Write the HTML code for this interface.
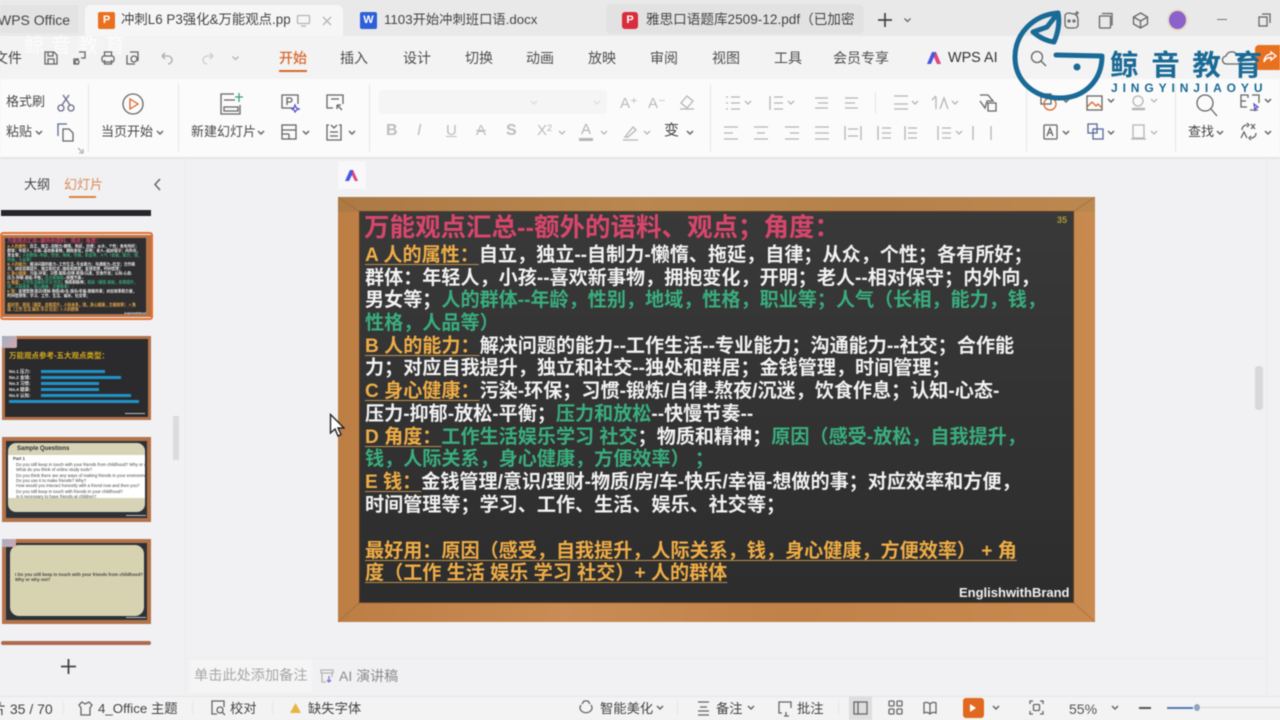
<!DOCTYPE html>
<html lang="zh"><head><meta charset="utf-8"><title>WPS</title>
<style>
html,body{margin:0;padding:0;width:1280px;height:720px;overflow:hidden;background:#f1f1f3}
#r{position:absolute;left:0;top:0;width:1280px;height:720px;overflow:hidden;background:#f1f1f3;font-family:"Liberation Sans","Noto Sans CJK SC",sans-serif;color:#444;filter:blur(.55px)}
.a{position:absolute;white-space:nowrap}
.m{position:absolute;white-space:nowrap;font-size:14px;line-height:20px;top:48px;color:#4d4d4d}
.s{position:absolute;white-space:nowrap;font-size:13px;line-height:18px;color:#4a4a4a}
.st{position:absolute;white-space:nowrap;font-size:13.3px;line-height:18px;top:700px;color:#444}
svg.i{position:absolute;overflow:visible;fill:none;stroke:#666;stroke-width:1.3}
svg.l{stroke:#b5b5b5}
.ln{position:absolute;left:365px;white-space:nowrap;font-size:19.1px;line-height:23px;font-weight:700;color:#f2f2f2}
.o{color:#f0ad45;text-decoration:underline;text-decoration-color:#b98f52;text-decoration-thickness:1px;text-underline-offset:3px}
.g{color:#39ae7e}
.th{position:absolute;left:2px;width:149px;background:#2b2b2d;border:3px solid #b37248;box-sizing:border-box;overflow:hidden}
.b{position:absolute;height:3px}
.sep{position:absolute;width:1px;background:#e6e6e6}
.tq{position:absolute;white-space:nowrap;font-size:4.3px;line-height:5px;color:#444}
</style></head><body><div id="r">

<!-- tab bar -->
<div class="a" style="left:0;top:0;width:1280px;height:36px;background:#e9e9e9"></div>
<div class="a" style="left:0;top:5px;width:78px;height:28px;background:#e3e3e3"></div>
<div class="a" style="left:-2px;top:10px;font-size:14px;line-height:20px;color:#444">WPS Office</div>
<div class="a" style="left:85px;top:5px;width:258px;height:31px;background:#f6f6f6;border-radius:6px 6px 0 0"></div>
<div class="a" style="left:98px;top:12px;width:17px;height:17px;background:#e8701f;border-radius:2px;color:#fff;font-size:11px;line-height:17px;text-align:center;font-weight:700">P</div>
<div class="a" style="left:121px;top:10px;width:169px;overflow:hidden;font-size:13.4px;line-height:20px;color:#444">冲刺L6 P3强化&amp;万能观点.pptx</div>
<svg class="i l" style="left:296px;top:14px" width="16" height="14"><rect x="1.5" y="1.5" width="12" height="8" rx="1"/><path d="M5 12h5"/></svg>
<svg class="i l" style="left:321px;top:15px" width="12" height="12"><path d="M2 2l8 8M10 2l-8 8"/></svg>
<div class="a" style="left:360px;top:12px;width:17px;height:17px;background:#2c5fd8;border-radius:2px;color:#fff;font-size:11px;line-height:17px;text-align:center;font-weight:700">W</div>
<div class="a" style="left:384px;top:10px;font-size:13.3px;line-height:20px;color:#444">1103开始冲刺班口语.docx</div>
<div class="a" style="left:606px;top:4px;width:258px;height:30px;background:#e2e2e2;border-radius:6px"></div>
<div class="a" style="left:622px;top:12px;width:16px;height:17px;background:#d92c3c;border-radius:3px;color:#fff;font-size:11px;line-height:17px;text-align:center;font-weight:700">P</div>
<div class="a" style="left:646px;top:10px;width:208px;overflow:hidden;font-size:13.6px;line-height:20px;color:#444">雅思口语题库2509-12.pdf（已加密）</div>
<svg class="i" style="left:877px;top:12px;stroke:#444;stroke-width:1.7" width="16" height="16"><path d="M8 1v14M1 8h14"/></svg>
<svg class="i" style="left:903px;top:17px" width="10" height="7"><path d="M1.5 1.5l3 3 3-3"/></svg>
<svg class="i" style="left:1063px;top:10px" width="17" height="19"><path d="M2 6c0-2 2-3 4-3l5 1c3 1 4 3 4 6v5c0 2-2 3-4 3H6c-3 0-4-2-4-4z"/><circle cx="6" cy="11" r="1"/><circle cx="11" cy="11" r="1"/><path d="M14 1v4M12 3h4"/></svg>
<svg class="i" style="left:1098px;top:12px" width="16" height="17"><rect x="1.5" y="4" width="11" height="12" rx="1"/><path d="M4 1.5h10v12"/></svg>
<svg class="i" style="left:1132px;top:12px" width="17" height="17"><path d="M8.5 1l7 4v7l-7 4-7-4V5zM1.5 5l7 4 7-4M8.5 9v7"/></svg>
<div class="a" style="left:1169px;top:11px;width:17px;height:18px;border-radius:50%;background:#8a62c9;box-shadow:0 0 0 2px #e9d9c4"></div>
<div class="a" style="left:1217px;top:19px;width:10px;height:1px;background:#777"></div>
<svg class="i" style="left:1258px;top:13px" width="13" height="14"><rect x="1" y="4" width="8" height="9"/><path d="M4 1h8v9"/></svg>

<!-- menu row -->
<div class="a" style="left:0;top:36px;width:1280px;height:43px;background:#f3f3f3"></div>
<div class="a" style="left:-6px;top:48px;font-size:14px;line-height:20px;color:#444">文件</div>
<div class="a" style="left:24px;top:34px;font-size:20px;line-height:24px;color:#fff;opacity:.8;letter-spacing:7px">鲸音教育</div>
<svg class="i" style="left:43px;top:50px" width="16" height="16"><path d="M2 2h9l3 3v9H2zM5 2v4h5V2M5 14V9h6v5"/></svg>
<svg class="i" style="left:72px;top:50px" width="16" height="16"><path d="M7 2h6v6H9M7 14H2V9h5"/><circle cx="5" cy="12" r="2"/></svg>
<svg class="i" style="left:100px;top:50px" width="16" height="16"><rect x="2" y="6" width="12" height="6" rx="2"/><path d="M4.5 6V2h7v4M4.5 10v4h7v-4"/></svg>
<svg class="i" style="left:125px;top:50px" width="16" height="16"><path d="M5 2h8v9M2 5v9h8"/><circle cx="9" cy="9" r="3"/></svg>
<svg class="i l" style="left:160px;top:51px;stroke:#aaa" width="14" height="13"><path d="M2 5h6a4 4 0 010 8M2 5l3-3M2 5l3 3"/></svg>
<svg class="i l" style="left:201px;top:51px;stroke:#ccc" width="14" height="13"><path d="M12 5H6a4 4 0 000 8M12 5L9 2M12 5L9 8"/></svg>
<svg class="i l" style="left:231px;top:55px" width="10" height="7"><path d="M1.5 1.5l3 3 3-3"/></svg>
<div class="m" style="left:279px;color:#d9682a;font-weight:500">开始</div>
<div class="a" style="left:279px;top:70px;width:28px;height:2px;background:#d9682a"></div>
<div class="m" style="left:340px">插入</div>
<div class="m" style="left:403px">设计</div>
<div class="m" style="left:465px">切换</div>
<div class="m" style="left:526px">动画</div>
<div class="m" style="left:588px">放映</div>
<div class="m" style="left:650px">审阅</div>
<div class="m" style="left:712px">视图</div>
<div class="m" style="left:774px">工具</div>
<div class="m" style="left:833px">会员专享</div>
<svg class="a" style="left:926px;top:50px" width="16" height="15"><path d="M1 14L6 2h4l5 12h-4L8 7l-3 7z" fill="#4a58e0"/><path d="M10 2l5 12h-4L8 7z" fill="#e8457a"/></svg>
<div class="m" style="left:948px;color:#333;font-size:14.4px">WPS AI</div>
<svg class="i" style="left:1030px;top:50px" width="17" height="17"><circle cx="7" cy="7" r="5.5"/><path d="M11 11l5 5"/></svg>
<svg class="i" style="left:1222px;top:50px" width="20" height="17"><path d="M5 14a4 4 0 01-1-8 6 6 0 0111-1 4.5 4.500 0 011 9z"/></svg>
<div class="a" style="left:1255px;top:45px;width:25px;height:25px;background:#e8701f;border-radius:4px 0 0 4px"></div>
<svg class="i" style="left:1262px;top:50px;stroke:#fff;stroke-width:1.4" width="16" height="15"><path d="M9 2l5 4-5 4V7.500C5 7.500 3 9 2 12c0-5 3-7.500 7-8z"/></svg>

<!-- ribbon -->
<div class="a" style="left:0;top:79px;width:1280px;height:78px;background:#fbfbfb;border-bottom:2px solid #e6e6e6"></div>
<div class="sep" style="left:88px;top:84px;height:68px"></div>
<div class="sep" style="left:178px;top:84px;height:68px"></div>
<div class="sep" style="left:369px;top:84px;height:68px"></div>
<div class="sep" style="left:710px;top:84px;height:68px"></div>
<div class="sep" style="left:875px;top:92px;height:22px"></div>
<div class="sep" style="left:1026px;top:84px;height:68px"></div>
<div class="sep" style="left:1175px;top:84px;height:68px"></div>

<div class="s" style="left:6px;top:93px">格式刷</div>
<svg class="i" style="left:57px;top:94px;stroke:#6a6a8a" width="18" height="18"><circle cx="4" cy="14" r="3"/><circle cx="14" cy="14" r="3"/><path d="M5 11L12 1M13 11L6 1"/></svg>
<div class="s" style="left:6px;top:123px">粘贴</div>
<svg class="i" style="left:35px;top:130px" width="8" height="6"><path d="M1 1l3 3 3-3" stroke-width="1.5"/></svg>
<svg class="i" style="left:57px;top:123px;stroke:#5a6a9a" width="18" height="19"><path d="M1 13V1h9"/><path d="M6 6h6l4 4v8H6z" stroke="#666"/></svg>
<svg class="i" style="left:122px;top:93px;stroke:#666" width="22" height="22"><circle cx="11" cy="11" r="10"/><path d="M8 6l8 5-8 5z" stroke="#d9682a"/></svg>
<div class="s" style="left:101px;top:123px">当页开始</div>
<svg class="i" style="left:156px;top:130px" width="8" height="6"><path d="M1 1l3 3 3-3" stroke-width="1.5"/></svg>
<svg class="i" style="left:219px;top:92px" width="24" height="23"><path d="M15 2H2v20h19v-9M5 8h11M5 15h14v4H5z"/><path d="M20 1v9M16 5h8" stroke="#3f9b7c"/></svg>
<div class="s" style="left:191px;top:123px">新建幻灯片</div>
<svg class="i" style="left:257px;top:130px" width="8" height="6"><path d="M1 1l3 3 3-3" stroke-width="1.5"/></svg>
<svg class="i" style="left:281px;top:94px" width="18" height="18"><path d="M13 14H1V1h16v9"/><path d="M6 11V4h3a2 2 0 010 4H6"/><path d="M14 11l1.5 3 2.500 1-2.500 1-1.500 2-1-2-2-1 2-1z" stroke="#5a54d0"/></svg>
<svg class="i" style="left:326px;top:94px" width="18" height="18"><path d="M7 14H1V1h16v9M5 5h8"/><path d="M16 16l-5-5M11 11v4M11 11h4"/></svg>
<svg class="i" style="left:281px;top:124px" width="16" height="16"><rect x="1" y="1" width="14" height="14"/><path d="M1 6h14M1 10h7M8 10v5"/></svg>
<svg class="i" style="left:302px;top:130px" width="8" height="6"><path d="M1 1l3 3 3-3" stroke-width="1.5"/></svg>
<svg class="i" style="left:326px;top:124px" width="16" height="17"><path d="M3 1H1v15h14V1h-2M4 8h8M4 12h8M5 1l3 3 3-3"/></svg>
<svg class="i" style="left:348px;top:130px" width="8" height="6"><path d="M1 1l3 3 3-3" stroke-width="1.5"/></svg>

<div class="a" style="left:379px;top:90px;width:228px;height:24px;background:#f5f5f5;border-radius:3px"></div>
<svg class="i l" style="left:530px;top:100px;stroke:#ddd" width="8" height="6"><path d="M1 1l3 3 3-3"/></svg>
<svg class="i l" style="left:593px;top:100px;stroke:#ddd" width="8" height="6"><path d="M1 1l3 3 3-3"/></svg>
<div class="a" style="left:386px;top:122px;font-size:16px;line-height:18px;color:#bdbdbd;font-weight:700">B</div>
<div class="a" style="left:417px;top:122px;font-size:16px;line-height:18px;color:#bdbdbd;font-style:italic">I</div>
<div class="a" style="left:446px;top:122px;font-size:15px;line-height:18px;color:#bdbdbd;text-decoration:underline">U</div>
<div class="a" style="left:476px;top:122px;font-size:15px;line-height:18px;color:#bdbdbd;text-decoration:line-through">A</div>
<div class="a" style="left:506px;top:122px;font-size:16px;line-height:18px;color:#bdbdbd;font-weight:700">S</div>
<div class="a" style="left:537px;top:122px;font-size:15px;line-height:18px;color:#bdbdbd">X²</div>
<svg class="i l" style="left:558px;top:130px" width="8" height="6"><path d="M1 1l3 3 3-3"/></svg>
<div class="a" style="left:581px;top:121px;font-size:15px;line-height:18px;color:#b5b5b5">A</div>
<div class="a" style="left:579px;top:138px;width:14px;height:3px;background:#b5b5b5"></div>
<svg class="i l" style="left:600px;top:130px" width="8" height="6"><path d="M1 1l3 3 3-3"/></svg>
<svg class="i l" style="left:622px;top:124px" width="18" height="17"><path d="M3 13L11 3l3 3-8 7zM1 16h15"/></svg>
<svg class="i l" style="left:643px;top:130px" width="8" height="6"><path d="M1 1l3 3 3-3"/></svg>
<div class="a" style="left:664px;top:122px;font-size:15px;line-height:18px;color:#444">变</div>
<svg class="i" style="left:686px;top:130px" width="8" height="6"><path d="M1 1l3 3 3-3" stroke-width="1.5"/></svg>
<div class="a" style="left:620px;top:95px;font-size:15px;line-height:18px;color:#bbb">A⁺</div>
<div class="a" style="left:648px;top:95px;font-size:15px;line-height:18px;color:#bbb">A⁻</div>
<svg class="i l" style="left:678px;top:94px" width="18" height="17"><path d="M3 9l6-7 6 5-6 7zM2 15h14"/></svg>

<!-- paragraph icons -->
<svg class="i l" style="left:725px;top:95px" width="140" height="16"><path d="M1 2h2M1 8h2M1 14h2M6 2h9M6 8h9M6 14h9M20 6l3 3 3-3M45 1v14M49 2h9M49 8h9M49 14h9M63 6l3 3 3-3M90 3h13M93 8h10M90 13h13M120 3h13M120 8h10M120 13h13"/></svg>
<svg class="i l" style="left:723px;top:125px" width="260" height="16"><path d="M1 2h14M1 8h9M1 14h14M31 2h14M34 8h8M31 14h14M62 2h14M67 8h9M62 14h14M92 2h14M92 8h14M92 14h14M122 1v14M125 4h10M125 11h10M138 1v14M155 1v14M159 3h9M159 8h9M159 13h9M185 3h9M185 8h9M185 13h9M182 1v14M215 1v14M219 3h9M219 8h9M219 13h9M233 6l3 3 3-3M250 1v14M268 1v14"/></svg>
<svg class="i l" style="left:892px;top:95px" width="78" height="16"><path d="M2 1h14M2 14h14M2 9h14M20 6l3 3 3-3M44 14V2M40 5l4-4M48 14l4-11 4 11M60 6l3 3 3-3"/></svg>
<svg class="i" style="left:979px;top:93px" width="18" height="19"><path d="M1 2h8l5 6H8l-2 7-5-7M9 10h8v8H9z"/></svg>

<!-- right groups -->
<svg class="i" style="left:1040px;top:93px" width="20" height="18"><rect x="1" y="1" width="10" height="10"/><circle cx="10" cy="11" r="6" stroke="#d9682a"/></svg>
<svg class="i" style="left:1062px;top:98px" width="8" height="6"><path d="M1 1l3 3 3-3" stroke-width="1.5"/></svg>
<svg class="i" style="left:1086px;top:95px" width="17" height="16"><rect x="1" y="1" width="15" height="14"/><path d="M1 12l5-5 4 4 2-2 4 4" stroke="#d9682a"/></svg>
<svg class="i" style="left:1107px;top:98px" width="8" height="6"><path d="M1 1l3 3 3-3" stroke-width="1.5"/></svg>
<svg class="i" style="left:1043px;top:124px" width="15" height="16"><path d="M1 1h13M1 15h13M1 1v14M14 1v14M4 12l3-8 3 8M5 9h4"/></svg>
<svg class="i" style="left:1062px;top:130px" width="8" height="6"><path d="M1 1l3 3 3-3" stroke-width="1.5"/></svg>
<svg class="i" style="left:1087px;top:123px;stroke:#5a6a9a" width="17" height="17"><rect x="1" y="1" width="9" height="9"/><rect x="6" y="6" width="10" height="10"/></svg>
<svg class="i" style="left:1107px;top:130px" width="8" height="6"><path d="M1 1l3 3 3-3" stroke-width="1.5"/></svg>
<svg class="i l" style="left:1130px;top:94px" width="17" height="17"><circle cx="8" cy="7" r="5"/><path d="M2 15h13" stroke-width="2.500"/></svg>
<svg class="i l" style="left:1150px;top:98px" width="8" height="6"><path d="M1 1l3 3 3-3"/></svg>
<svg class="i l" style="left:1130px;top:124px" width="17" height="16"><path d="M3 1h11v13H3zM1 15h15"/></svg>
<svg class="i l" style="left:1150px;top:130px" width="8" height="6"><path d="M1 1l3 3 3-3"/></svg>
<svg class="i" style="left:1195px;top:94px" width="24" height="24"><circle cx="10" cy="9" r="8"/><path d="M16 15l6 7"/></svg>
<div class="s" style="left:1188px;top:123px;color:#444">查找</div>
<svg class="i" style="left:1216px;top:130px" width="8" height="6"><path d="M1 1l3 3 3-3" stroke-width="1.5"/></svg>
<svg class="i" style="left:1240px;top:94px" width="20" height="18"><path d="M8 4V1H1v12h6M12 1h7v8M1 7h5M10 16h8"/><path d="M14 10l4 3-2 1-1 2z" stroke="#5a54d0"/></svg>
<svg class="i" style="left:1264px;top:98px" width="8" height="6"><path d="M1 1l3 3 3-3" stroke-width="1.5"/></svg>
<svg class="i" style="left:1240px;top:122px" width="18" height="19"><path d="M2 8c0-3 2-5 5-5M7 1l2 2-2 2M16 11c0 3-2 5-5 5M11 18l-2-2 2-2M11 2l4 5M15 2l-4 5M1 16l3-6 3 6"/></svg>
<svg class="i" style="left:1264px;top:130px" width="8" height="6"><path d="M1 1l3 3 3-3" stroke-width="1.5"/></svg>
<svg class="i l" style="left:77px;top:147px" width="7" height="7"><path d="M1 1l5 5M6 2v4H2"/></svg>

<!-- logo -->
<svg class="a" style="left:0;top:0;pointer-events:none" width="1280" height="110"><g fill="none" stroke="#196a96" stroke-width="5" stroke-linejoin="round" stroke-linecap="round"><path d="M1058 13C1032 15 1015 35 1015 57C1015 82 1035 98 1060 98C1085 98 1102 80 1102 56L1056 55"/><path d="M1058 13L1047 27L1033 32C1040 38 1047 41 1054 42C1058 33 1060 22 1058 13"/></g><circle cx="1077" cy="67" r="3.5" fill="#196a96"/></svg>
<div class="a" style="left:1110px;top:47px;font-size:28.500px;line-height:38px;font-weight:700;letter-spacing:12.700px;color:#196a96">鲸音教育</div>
<div class="a" style="left:1111px;top:81px;font-size:12px;line-height:15px;font-weight:700;letter-spacing:4.900px;color:#196a96">JINGYINJIAOYU</div>

<!-- left panel -->
<div class="a" style="left:185px;top:159px;width:1px;height:536px;background:#ebebeb"></div>
<div class="a" style="left:24px;top:176px;font-size:13px;line-height:18px;color:#444">大纲</div>
<div class="a" style="left:64px;top:176px;font-size:13px;line-height:18px;color:#d98a55">幻灯片</div>
<div class="a" style="left:69px;top:196px;width:27px;height:2px;background:#d9843f"></div>
<svg class="i" style="left:153px;top:178px" width="9" height="13"><path d="M7 1L2 6.500 7 12" stroke-width="1.5"/></svg>
<div class="a" style="left:1px;top:210px;width:150px;height:6px;background:#26262a"></div>
<div class="a" style="left:173px;top:416px;width:6px;height:44px;background:#dcdcdc"></div>

<div class="a" style="left:0;top:232px;width:153px;height:88px;border:2px solid #e8702c;border-radius:3px;box-sizing:border-box"></div>
<div class="a" style="left:2px;top:235px;width:149px;height:82px;background:#b37248"></div>
<div class="a" style="left:5px;top:238px;width:141px;height:76px;background:#2e2e30"></div>
<div class="a" style="left:0;top:0;width:1280px;height:720px;transform-origin:0 0;transform:translate(-64.600px,196.200px) scale(.197)">
<div class="a" style="left:364px;top:212px;font-size:25.500px;line-height:30px;font-weight:700;color:#d8466b">万能观点汇总--额外的语料、观点；角度：</div>
<div class="ln" style="top:244px"><span class="o">A 人的属性：</span>自立，独立--自制力-懒惰、拖延，自律；从众，个性；各有所好；</div>
<div class="ln" style="top:267px">群体：年轻人，小孩--喜欢新事物，拥抱变化，开明；老人--相对保守；内外向，</div>
<div class="ln" style="top:289px">男女等；<span class="g">人的群体--年龄，性别，地域，性格，职业等；人气（长相，能力，钱，</span></div>
<div class="ln g" style="top:312px">性格，人品等）</div>
<div class="ln" style="top:335px"><span class="o">B 人的能力：</span>解决问题的能力--工作生活--专业能力；沟通能力--社交；合作能</div>
<div class="ln" style="top:357px">力；对应自我提升，独立和社交--独处和群居；金钱管理，时间管理；</div>
<div class="ln" style="top:380px"><span class="o">C 身心健康：</span>污染-环保；习惯-锻炼/自律-熬夜/沉迷，饮食作息；认知-心态-</div>
<div class="ln" style="top:403px">压力-抑郁-放松-平衡；<span class="g">压力和放松</span>--快慢节奏--</div>
<div class="ln" style="top:426px"><span class="o">D 角度：</span><span class="g">工作生活娱乐学习 社交</span>；物质和精神；<span class="g">原因（感受-放松，自我提升，</span></div>
<div class="ln g" style="top:448px">钱，人际关系，身心健康，方便效率） ；</div>
<div class="ln" style="top:471px"><span class="o">E 钱：</span>金钱管理/意识/理财-物质/房/车-快乐/幸福-想做的事；对应效率和方便，</div>
<div class="ln" style="top:494px">时间管理等；学习、工作、生活、娱乐、社交等；</div>
<div class="ln" style="top:540px;color:#f0ad45"><span class="o">最好用：原因（感受，自我提升，人际关系，钱，身心健康，方便效率） + 角</span></div>
<div class="ln" style="top:562px;color:#f0ad45"><span class="o">度（工作 生活 娱乐 学习 社交）+ 人的群体</span></div>
<div class="a" style="left:959px;top:585px;font-size:13px;line-height:16px;font-weight:700;color:#f0f0f0">EnglishwithBrand</div>
</div>

<div class="th" style="top:336px;height:84px">
<div class="a" style="left:4px;top:12px;font-size:7.500px;line-height:10px;font-weight:700;color:#d4a91e">万能观点参考-五大观点类型：</div>
<div class="a" style="left:4px;top:30px;font-size:4.500px;line-height:6px;font-weight:700;color:#e8e8e8">No.1 压力:<br>No.2 金钱:<br>No.3 习惯:<br>No.4 健康:<br>No.5 认知:</div>
<div class="b" style="left:36px;top:31px;width:64px;background:#1f93c9"></div>
<div class="b" style="left:36px;top:37px;width:80px;background:#1f93c9"></div>
<div class="b" style="left:36px;top:43px;width:58px;background:#1f93c9"></div>
<div class="b" style="left:36px;top:49px;width:58px;background:#1f93c9"></div>
<div class="b" style="left:36px;top:55px;width:90px;background:#1f93c9"></div>
<div class="b" style="left:4px;top:61px;width:130px;background:#1f93c9"></div>
<div class="b" style="left:120px;top:74px;width:20px;background:#bbb;height:1px"></div>
</div>
<div class="a" style="left:2px;top:336px;width:15px;height:12px;background:linear-gradient(135deg,#9fb0c4,#d7a7ad);border-radius:2px"></div>

<div class="th" style="top:437px;height:85px;background:#2d3238;border-width:4px">
<div class="a" style="left:2px;top:2px;width:137px;height:69px;background:#d6d3b6;border-radius:8px"></div>
<div class="a" style="left:2px;top:14px;width:137px;height:43px;background:#fff"></div>
<div class="a" style="left:11px;top:4px;font-size:6px;line-height:8px;font-weight:700;color:#333">Sample Questions</div>
<div class="tq" style="left:7px;top:15px;font-weight:700">Part 1</div>
<div class="tq" style="left:10px;top:21px">Do you still keep in touch with your friends from childhood? Why or why not?</div>
<div class="tq" style="left:10px;top:26px">What do you think of online study tools?</div>
<div class="tq" style="left:10px;top:32px">Do you think there are any ways of making friends in your environment?</div>
<div class="tq" style="left:10px;top:37px">Do you use it to make friends? Why?</div>
<div class="tq" style="left:10px;top:42px">How would you interact honestly with a friend now and then you?</div>
<div class="tq" style="left:10px;top:48px">Do you still keep in touch with friends in your childhood?</div>
<div class="tq" style="left:10px;top:53px">Is it necessary to have friends at children?</div>
<div class="b" style="left:120px;top:74px;width:20px;background:#bbb;height:1px"></div>
</div>

<div class="th" style="top:539px;height:85px;background:#2d3238;border-width:4px">
<div class="a" style="left:4px;top:2px;width:134px;height:71px;background:#d7d2b0;border-radius:9px"></div>
<div class="a" style="left:9px;top:29px;font-size:4.400px;line-height:5px;font-weight:700;color:#444;white-space:nowrap">I Do you still keep in touch with your friends from childhood?<br>Why or why not?</div>
<div class="b" style="left:120px;top:74px;width:20px;background:#bbb;height:1px"></div>
</div>
<div class="a" style="left:2px;top:539px;width:14px;height:8px;background:linear-gradient(135deg,#9fb0c4,#d7a7ad)"></div>
<div class="a" style="left:1px;top:641px;width:150px;height:4px;background:#ad6a4e;border-radius:2px"></div>
<svg class="i" style="left:61px;top:659px;stroke:#444;stroke-width:1.8" width="15" height="15"><path d="M7.5 0v15M0 7.500h15"/></svg>

<!-- AI badge -->
<div class="a" style="left:338px;top:161px;width:28px;height:28px;background:#f8f8fa"></div>
<svg class="a" style="left:344px;top:168px" width="16" height="14"><path d="M1 13L6 2h3l5 11h-3L8 7l-3 6z" fill="#4a58e0"/><path d="M9 2l5 11h-3L8 7z" fill="#e8457a"/></svg>

<!-- slide -->
<div class="a" style="left:338px;top:197px;width:757px;height:425px;background:linear-gradient(90deg,#bd7e44 0%,#c98c56 30%,#c08248 60%,#c98a50 100%)"></div>
<div class="a" style="left:338px;top:197px;width:757px;height:15px;background:linear-gradient(90deg,#ad7a45,#b98750 40%,#b5824b 70%,#bb8850)"></div>
<svg class="a" style="left:338px;top:197px" width="757" height="425"><path d="M0 0L22 15M757 0L735 15M0 425L22 405M757 425L735 405" stroke="#8f5f33" stroke-opacity=".5" stroke-width="1"/></svg>
<div class="a" style="left:360px;top:212px;width:713px;height:390px;background:linear-gradient(#393939,#2d2d2d);box-shadow:0 0 0 1px #5d3d22"></div>
<div class="a" style="left:1057px;top:215px;font-size:9px;line-height:11px;font-weight:700;color:#a89a35">35</div>

<div class="a" style="left:364px;top:213px;font-size:25.500px;line-height:30px;font-weight:700;color:#d8466b">万能观点汇总--额外的语料、观点；角度：</div>
<div class="ln" style="top:244px"><span class="o">A 人的属性：</span>自立，独立--自制力-懒惰、拖延，自律；从众，个性；各有所好；</div>
<div class="ln" style="top:267px">群体：年轻人，小孩--喜欢新事物，拥抱变化，开明；老人--相对保守；内外向，</div>
<div class="ln" style="top:289px">男女等；<span class="g">人的群体--年龄，性别，地域，性格，职业等；人气（长相，能力，钱，</span></div>
<div class="ln g" style="top:312px">性格，人品等）</div>
<div class="ln" style="top:335px"><span class="o">B 人的能力：</span>解决问题的能力--工作生活--专业能力；沟通能力--社交；合作能</div>
<div class="ln" style="top:357px">力；对应自我提升，独立和社交--独处和群居；金钱管理，时间管理；</div>
<div class="ln" style="top:380px"><span class="o">C 身心健康：</span>污染-环保；习惯-锻炼/自律-熬夜/沉迷，饮食作息；认知-心态-</div>
<div class="ln" style="top:403px">压力-抑郁-放松-平衡；<span class="g">压力和放松</span>--快慢节奏--</div>
<div class="ln" style="top:426px"><span class="o">D 角度：</span><span class="g">工作生活娱乐学习 社交</span>；物质和精神；<span class="g">原因（感受-放松，自我提升，</span></div>
<div class="ln g" style="top:448px">钱，人际关系，身心健康，方便效率） ；</div>
<div class="ln" style="top:471px"><span class="o">E 钱：</span>金钱管理/意识/理财-物质/房/车-快乐/幸福-想做的事；对应效率和方便，</div>
<div class="ln" style="top:494px">时间管理等；学习、工作、生活、娱乐、社交等；</div>
<div class="ln" style="top:540px;color:#f0ad45"><span class="o">最好用：原因（感受，自我提升，人际关系，钱，身心健康，方便效率） + 角</span></div>
<div class="ln" style="top:562px;color:#f0ad45"><span class="o">度（工作 生活 娱乐 学习 社交）+ 人的群体</span></div>
<div class="a" style="left:959px;top:585px;font-size:13px;line-height:16px;font-weight:700;color:#f0f0f0">EnglishwithBrand</div>

<!-- cursor -->
<svg class="a" style="left:329px;top:413px" width="16" height="26"><path d="M1.5 1.500V20l4.500-4 3 7 3-1.500-3-6.500h6z" fill="#fff" stroke="#222" stroke-width="1.4"/></svg>

<!-- scrollbar -->
<div class="a" style="left:1266px;top:159px;width:1px;height:536px;background:#e9e9e9"></div>
<div class="a" style="left:1255px;top:366px;width:8px;height:44px;background:#d8d8d8;border-radius:3px"></div>

<!-- notes -->
<div class="a" style="left:185px;top:658px;width:1081px;height:1px;background:#ececec"></div>
<div class="a" style="left:190px;top:660px;width:122px;height:32px;background:#f5f5f5"></div>
<div class="a" style="left:194px;top:667px;font-size:14.2px;line-height:18px;color:#a8a8a8">单击此处添加备注</div>
<svg class="i l" style="left:320px;top:669px" width="14" height="15"><path d="M1 1h12v3H1zM2 4v9h4M12 4v4"/><path d="M9 7v6M7 11l2 2 2-2" stroke="#7a78d0"/></svg>
<div class="a" style="left:339px;top:667px;font-size:14px;line-height:18px;color:#8a8a8a">AI 演讲稿</div>

<!-- status bar -->
<div class="a" style="left:0;top:696px;width:1280px;height:24px;background:#f3f3f3;border-top:1px solid #e6e6e6"></div>
<div class="st" style="left:-8px;font-size:14px">片 35 / 70</div>
<div class="sep" style="left:63px;top:701px;height:14px"></div>
<svg class="i" style="left:78px;top:701px" width="15" height="15"><path d="M4 1l3 2 4-2 3 3-2 3v7H3V7L1 4z"/></svg>
<div class="st" style="left:98px">4_Office 主题</div>
<div class="sep" style="left:192px;top:701px;height:14px"></div>
<svg class="i" style="left:211px;top:700px" width="15" height="16"><path d="M6 14H1V1h12v6"/><circle cx="9" cy="10" r="3"/><path d="M11 12l3 3"/></svg>
<div class="st" style="left:230px">校对</div>
<div class="sep" style="left:272px;top:701px;height:14px"></div>
<svg class="a" style="left:289px;top:702px" width="13" height="12"><path d="M6.500 1L12 11H1z" fill="#e9b33f"/></svg>
<div class="st" style="left:308px">缺失字体</div>
<svg class="i" style="left:579px;top:700px" width="14" height="16"><path d="M2 5a6 5 0 1010 0M3 4l2-3h4l2 3"/></svg>
<div class="st" style="left:600px">智能美化</div>
<svg class="i" style="left:656px;top:705px" width="8" height="6"><path d="M1 1l3 3 3-3" stroke-width="1.5"/></svg>
<div class="sep" style="left:677px;top:701px;height:14px"></div>
<svg class="i" style="left:697px;top:701px" width="13" height="14"><path d="M1 1h11M3 6h7M1 10h11M1 14h11"/></svg>
<div class="st" style="left:716px">备注</div>
<svg class="i" style="left:747px;top:705px" width="8" height="6"><path d="M1 1l3 3 3-3" stroke-width="1.5"/></svg>
<svg class="i" style="left:778px;top:701px" width="14" height="15"><path d="M4 12H1V1h12v6M6 15h5M8 11v4"/></svg>
<div class="st" style="left:797px">批注</div>
<div class="sep" style="left:838px;top:701px;height:14px"></div>
<div class="a" style="left:849px;top:696px;width:23px;height:24px;background:#dedede"></div>
<svg class="i" style="left:853px;top:701px" width="15" height="14"><rect x="1" y="1" width="13" height="12"/><path d="M5 1v12"/></svg>
<svg class="i" style="left:888px;top:700px" width="15" height="15"><rect x="1" y="1" width="5" height="5" rx="1"/><rect x="9" y="1" width="5" height="5" rx="1"/><rect x="1" y="9" width="5" height="5" rx="1"/><rect x="9" y="9" width="5" height="5" rx="1"/></svg>
<svg class="i" style="left:923px;top:701px" width="14" height="14"><path d="M7 3C5 1 3 1 1 2v10c2-1 4-1 6 1 2-2 4-2 6-1V2c-2-1-4-1-6 1zM7 3v10"/></svg>
<div class="a" style="left:963px;top:698px;width:21px;height:20px;background:#e0691f;border-radius:3px"></div>
<svg class="a" style="left:970px;top:704px" width="7" height="8"><path d="M0 0l6 4-6 4z" fill="#fff"/></svg>
<svg class="i" style="left:992px;top:705px" width="8" height="6"><path d="M1 1l3 3 3-3" stroke-width="1.5"/></svg>
<svg class="i" style="left:1029px;top:700px" width="15" height="15"><path d="M1 4V1h3M11 1h3v3M14 11v3h-3M4 14H1v-3"/><rect x="4.500" y="4.500" width="6" height="6" rx="1"/></svg>
<div class="st" style="left:1069px;color:#555;font-size:14px">55%</div>
<svg class="i" style="left:1111px;top:705px" width="8" height="6"><path d="M1 1l3 3 3-3" stroke-width="1.5"/></svg>
<div class="a" style="left:1139px;top:707px;width:12px;height:2px;background:#555"></div>
<div class="a" style="left:1167px;top:707px;width:26px;height:2px;background:#5578b8"></div>
<div class="a" style="left:1194px;top:704px;width:6px;height:7px;border-radius:50%;background:#8fa3c0"></div>
<div class="a" style="left:1201px;top:707px;width:79px;height:1px;background:#d5d5d5"></div>
</div></body></html>
